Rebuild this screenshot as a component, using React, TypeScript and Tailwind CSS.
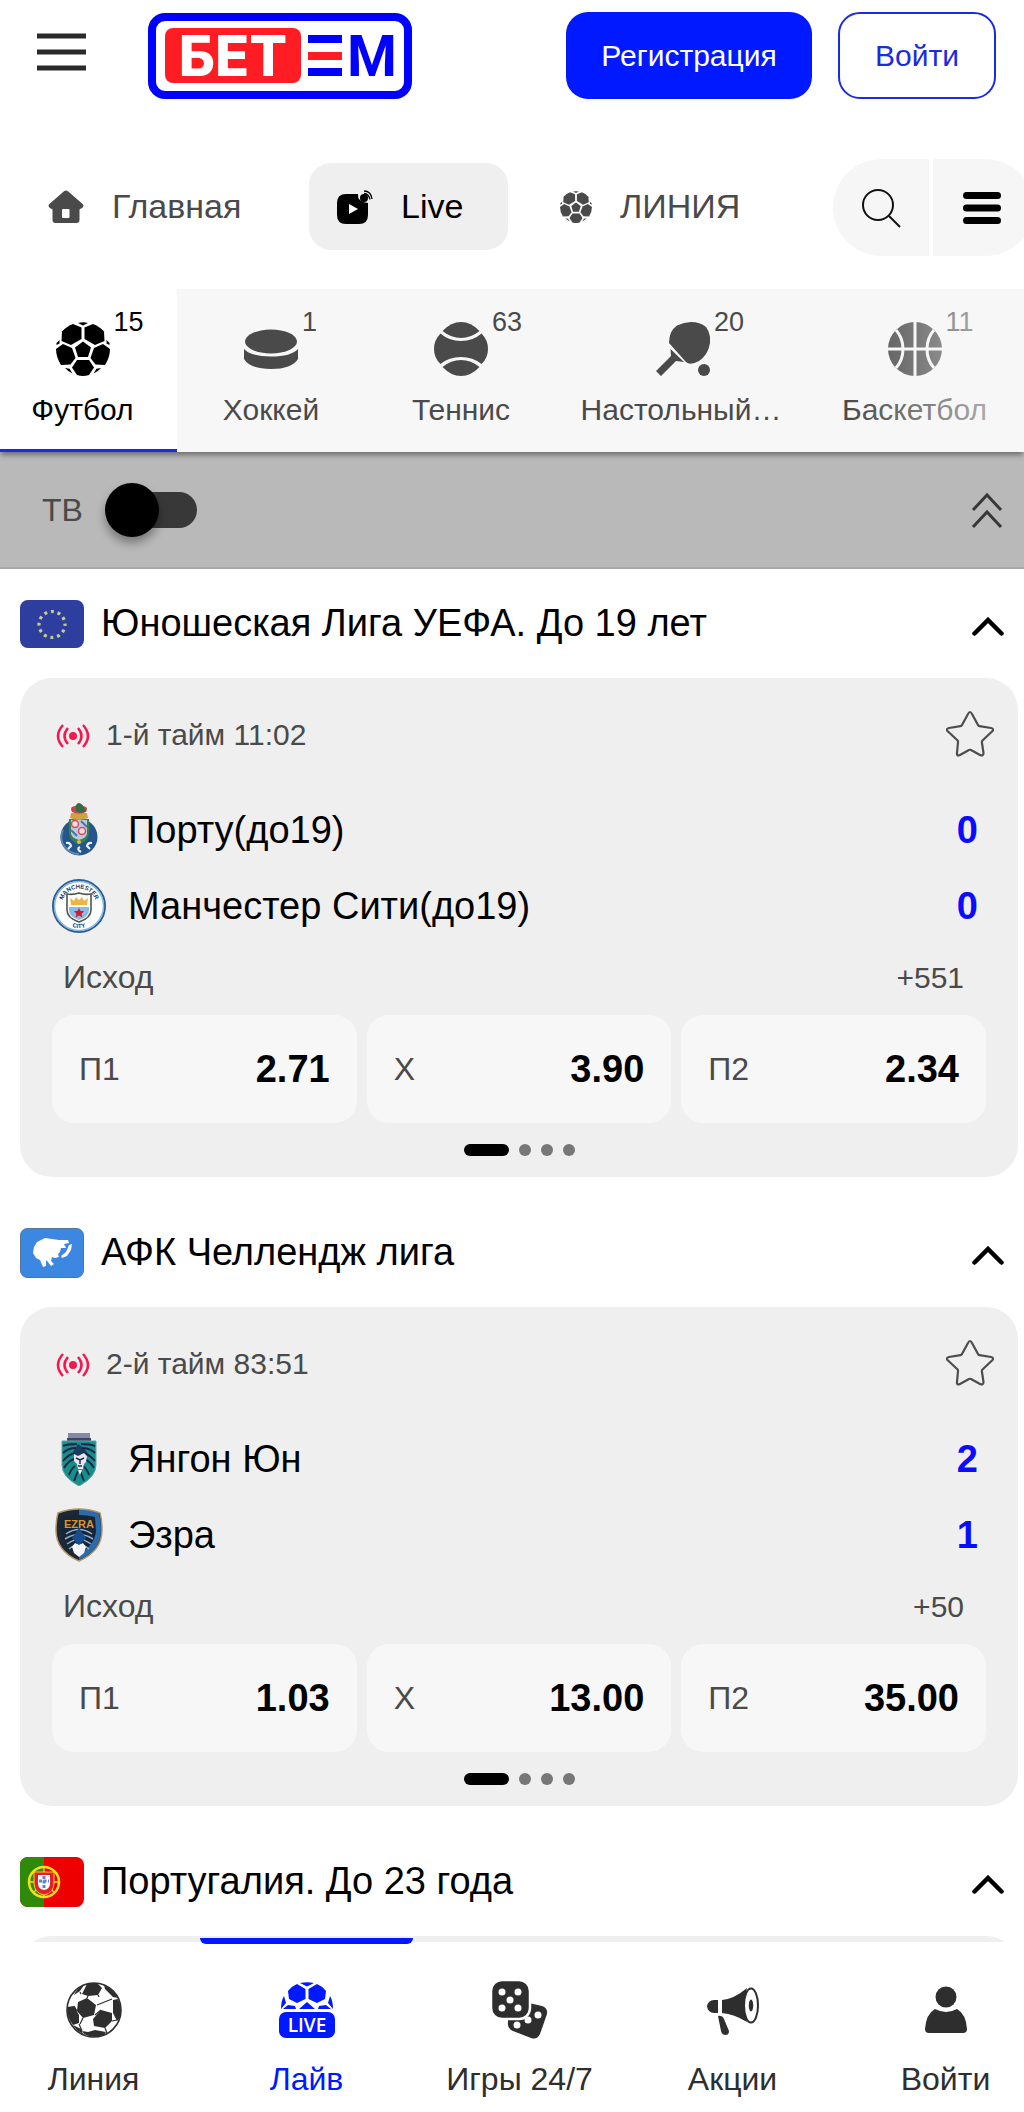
import type { ReactNode } from "react";

interface Team {
  name: string;
  score: number;
  crest: ReactNode;
}

interface Match {
  league: string;
  flag: ReactNode;
  period: string;
  teams: Team[];
  more: string;
  odds: { label: string; value: string }[];
}

/* ---------- Icons ---------- */

function Logo() {
  return (
    <svg viewBox="0 0 264 86" className="h-[86px] w-[264px]" role="img" aria-label="БЕТЕМ">
      <rect x="4" y="4" width="256" height="78" rx="13" fill="#fff" stroke="#0000ff" strokeWidth="8" />
      <rect x="17" y="15" width="136" height="55" rx="8" fill="#ff1d23" />
      <text x="85" y="63" textAnchor="middle" fill="#fff" className="font-['Inter',sans-serif] text-[56px] font-extrabold">
        БЕТ
      </text>
      <path d="M160 22h34v8h-34zM160 55h34v8h-34z" fill="#0000ff" />
      <path d="M160 39h34v8h-34z" fill="#ff1d23" />
      <text x="224" y="63" textAnchor="middle" fill="#0000ff" className="font-['Roboto',sans-serif] text-[57px] font-bold">
        М
      </text>
    </svg>
  );
}

function HomeIcon() {
  return (
    <svg viewBox="0 0 36 34" className="h-[34px] w-9" fill="currentColor">
      <path
        fillRule="evenodd"
        d="M16 1.2q2-1.6 4 0l14.600 12.800q2 2-.6 4l-2.500 1.500v10.500q0 3-3 3h-21q-3 0-3-3v-10.500L2 18q-2.600-2-.6-4zM15 19q-1 0-1 1v7q0 1 1 1h5.500q1 0 1-1v-7q0-1-1-1z"
      />
    </svg>
  );
}

function LiveIcon() {
  return (
    <svg viewBox="0 0 36 34" className="h-[34px] w-9">
      <path d="M9 4h12q-1 8 10 9v12q0 9-9 9H9q-9 0-9-9V13q0-9 9-9z" fill="#000" />
      <path d="M12 14l9 5-9 5z" fill="#fff" />
      <circle cx="27" cy="8" r="4" fill="#000" />
      <path d="M27 1q7 0 8 8M27 3.500q5 .5 6 6" stroke="#000" strokeWidth="1.300" fill="none" />
    </svg>
  );
}

function BallIcon({ className }: { className: string }) {
  return (
    <svg viewBox="0 0 54 54" className={className} fill="currentColor">
      <path d="M22 1Q27-.5 32 1l-5 2.500z" />
      <path d="M25.500 5.500V17L15 23 5.500 19l.5-9.500Q11 4 17 2z" />
      <path d="M28.500 5.500V17L39 23l9.500-4-.5-9.500Q43 4 37 2z" />
      <path d="M27 19.500l8 6L32 35H22l-3-9.500z" />
      <path d="M7 22l9 4 3.500 10-5 6.500-9.500.5Q0 35 0 27z" />
      <path d="M47 22l-9 4-3.500 10 5 6.500 9.500.5Q54 35 54 27z" />
      <path d="M21 38h12l5 7.500-5 7.500q-6 2-12 0l-5-7.500z" />
      <path d="M.5 21L3.500 18v3.500L.5 23zM53.500 21l-3-3v3.500l3 1.500zM9 46l4.500.8 3 4.700Q12 49.500 9 46zM45 46l-4.500.8-3 4.700q4.500-2 7.500-5.500z" />
    </svg>
  );
}

function SearchIcon() {
  return (
    <svg viewBox="0 0 40 40" className="size-10" fill="none" stroke="#111" strokeWidth="2">
      <circle cx="17" cy="17" r="15" />
      <path d="M28 28l11 11" />
    </svg>
  );
}

function PuckIcon() {
  return (
    <svg viewBox="0 0 54 54" className="size-[54px]" fill="currentColor">
      <ellipse cx="27" cy="19.500" rx="26" ry="12" />
      <path d="M0 27q7 7.500 27 7.500T54 27v10q-6 10-27 10T0 37z" />
    </svg>
  );
}

function TennisIcon() {
  return (
    <svg viewBox="0 0 54 54" className="size-[54px]" fill="currentColor">
      <path d="M8.500 9Q17 0 27 0t18.500 9Q37 16 27 16T8.500 9z" />
      <path d="M6.500 11.500Q15 19 27 19t20.500-7.500Q54 18 54 27t-6.500 15Q39 35 27 35T6.500 42Q0 36 0 27t6.500-15.500z" />
      <path d="M8.500 45Q17 38 27 38t18.500 7Q37 54 27 54T8.500 45z" />
    </svg>
  );
}

function TableTennisIcon() {
  return (
    <svg viewBox="-4 0 58 54" className="h-[54px] w-[58px]" fill="currentColor">
      <path d="M13 21Q13 9 21 3.500 28 0 35 0q9 0 15 5 5 6 4 16-2 12-11 18-9 5-13 1z" />
      <path d="M14.500 27L28 40l-8-1L5 54l-5-5 15-15z" />
      <circle cx="48" cy="48" r="6" />
    </svg>
  );
}

function BasketballIcon() {
  return (
    <svg viewBox="0 0 54 54" className="size-[54px]">
      <circle cx="27" cy="27" r="27" fill="currentColor" />
      <path d="M27 0v54M0 27h54M8 8q7 8 7 19T8 46M46 8q-7 8-7 19t7 19" stroke="#f7f7f7" strokeWidth="3" fill="none" />
    </svg>
  );
}

function SignalIcon() {
  return (
    <svg viewBox="0 0 34 24" className="mt-1 h-6 w-[34px]" fill="none" stroke="#f5174f" strokeWidth="2.500">
      <circle cx="17" cy="12" r="4" fill="#f5174f" stroke="none" />
      <path d="M7 1q-10 11 0 22M12 4q-7 8 0 16M27 1q10 11 0 22M22 4q7 8 0 16" />
    </svg>
  );
}

function StarIcon() {
  return (
    <svg viewBox="0 0 48 48" className="size-12" fill="none" stroke="#4d4d4d" strokeWidth="2.200" strokeLinejoin="round">
      <path d="M22 4q2-4 4 0l6 11q.5 1 1.500 1.100L45 18q3.500.8 1 3.500l-9.500 9q-.8.800-.6 2L37.500 43q0 3-3 2.200L25 40q-1-.5-2 0l-9.500 5.200q-3 .8-2.500-2.200l1-11q.2-1-.6-1.800L2 21.500q-2.500-2.700 1-3.500l11.500-1.900q1-.1 1.500-1.100z" />
    </svg>
  );
}

function ChevronUp() {
  return (
    <svg viewBox="0 0 32 19" className="h-[19px] w-8" fill="none" stroke="#000" strokeWidth="4.500" strokeLinecap="round">
      <path d="M2.500 16.500L16 3l13.500 13.500" />
    </svg>
  );
}

/* ---------- Flags and crests ---------- */

function EuFlag() {
  return (
    <svg viewBox="0 0 64 48" className="h-12 w-16 shrink-0 rounded-lg">
      <rect width="64" height="48" fill="#2d3e9f" />
      <circle cx="32" cy="24.500" r="13" fill="none" stroke="#c8cc8a" strokeWidth="3.200" strokeDasharray="3 3.807" strokeDashoffset="1.500" />
    </svg>
  );
}

function AsiaFlag() {
  return (
    <svg viewBox="0 0 64 50" className="h-[50px] w-16 shrink-0">
      <rect x=".5" y=".5" width="63" height="49" rx="7" fill="#3c87e2" stroke="#52749e" />
      <path
        d="M14 19l3-5 8-4 14 2 9 0 1 3-5 1 2 4-5 0-1 4-2 2 1 3-4 1-3-1-1 4 3 3-3 2-3-4-2-2 0 6-3 1-3-7-4-2-3-5z"
        fill="#fff"
      />
      <path d="M49 17l3-1-1 6-4 6-5 2-1-2 5-4z" fill="#fff" />
    </svg>
  );
}

function PortugalFlag() {
  return (
    <svg viewBox="0 0 64 50" className="h-[50px] w-16 shrink-0 rounded-lg">
      <rect width="64" height="50" fill="#ee0000" />
      <rect width="24" height="50" fill="#2f8a0a" />
      <circle cx="24" cy="25" r="15" fill="none" stroke="#f7e01c" strokeWidth="2.500" />
      <path d="M24 11v28M9 25h30M14 15q10 12 20 20M34 15q-10 12-20 20" stroke="#f7e01c" strokeWidth="1.300" fill="none" />
      <path d="M14 15h20v11q0 10-10 12-10-2-10-12z" fill="#e2202c" stroke="#f3d02a" />
      <path d="M18 18h12v8q0 6-6 7-6-1-6-7z" fill="#fff" />
      <path d="M24 19v13M19 24h10" stroke="#5a83c9" strokeWidth="3" strokeDasharray="3 1.500" />
    </svg>
  );
}

function PortoCrest() {
  return (
    <svg viewBox="0 0 54 54" className="size-[54px]">
      <circle cx="27" cy="34" r="18.500" fill="#24568c" />
      <path d="M11 27q-5 12 5 20 5 4 11 4" stroke="#5b87b4" strokeWidth="2" fill="none" />
      <path d="M17 16q-1 16 2 20 3 4 8 5 5-1 8-5 3-4 2-20z" fill="#3e7d4c" />
      <path d="M19 17h16v13q0 5-8 7-8-2-8-7z" fill="#b8cbe3" />
      <circle cx="23" cy="21" r="3.500" fill="#f3dbe2" stroke="#d44b5c" strokeWidth="1.500" />
      <circle cx="30" cy="28" r="3.500" fill="#f3dbe2" stroke="#d44b5c" strokeWidth="1.500" />
      <path d="M19 27l6 6M29 18l6 6" stroke="#4c74aa" strokeWidth="2" />
      <path d="M19 10h16l1 5q-9 4-18 0z" fill="#cfa23f" />
      <path d="M20 9q-3-5 3-6 4-4 8 0 6 1 3 6-7 3-14 0z" fill="#c8414a" />
      <path d="M24 8q-1-8 3-8 4 1 5 5l2 3-6 2z" fill="#2d7046" />
      <circle cx="27" cy="39" r="2" fill="#d8bc56" />
      <path d="M14 40q4-1 5 3l-3 3M40 40q-4-1-5 3l3 3M28 44q-4 2 1 5" stroke="#e8eff6" strokeWidth="2.200" fill="none" />
    </svg>
  );
}

function CityCrest() {
  return (
    <svg viewBox="0 0 54 54" className="size-[54px]">
      <circle cx="27" cy="27" r="26" fill="#fff" stroke="#2d5d8e" strokeWidth="2" />
      <circle cx="27" cy="27" r="24.500" fill="none" stroke="#83b6e2" strokeWidth="1.500" />
      <path id="city-top" d="M9.500 27a17.500 17.500 0 0 1 35 0" fill="none" />
      <path id="city-bottom" d="M5 27a22 22 0 0 0 44 0" fill="none" />
      <text fill="#1d3759" textAnchor="middle" className="font-['Liberation_Sans',sans-serif] text-[6px] font-bold">
        <textPath href="#city-top" startOffset="50%">MANCHESTER</textPath>
      </text>
      <text fill="#1d3759" textAnchor="middle" className="font-['Liberation_Sans',sans-serif] text-[6px] font-bold">
        <textPath href="#city-bottom" startOffset="50%">CITY</textPath>
      </text>
      <path d="M15 15q6 1 12-1 6 2 12 1v16q0 8-12 12-12-4-12-12z" fill="#fff" stroke="#4d554c" strokeWidth="1.600" />
      <path d="M17 28h20v3q0 7-10 10-10-3-10-10z" fill="#8abbe4" />
      <path d="M19 26h16l1-7-4 3-2-4-3 3-3-3-2 4-4-3z" fill="#efb343" />
      <path d="M27 29l1.500 3 3.500 0-2.500 3 1 3.500-3.500-2-3.500 2 1-3.500-2.500-3 3.500 0z" fill="#c9202f" />
    </svg>
  );
}

function YangonCrest() {
  return (
    <svg viewBox="0 0 54 54" className="size-[54px]">
      <path d="M16 1h22v6H16z" fill="#8389a3" />
      <path d="M15 6h24v4H15z" fill="#3c4569" />
      <path d="M10 9h34v24q0 12-17 21-17-9-17-21z" fill="#169087" stroke="#68a5ac" />
      <path
        d="M25 12q-9 0-14 2M24 16q-8 0-13 5M23 21q-6 1-12 8M22 27q-6 2-10 9M23 34q-4 3-6 9M26 39l-4 10M29 12q9 0 14 2M30 16q8 0 13 5M31 21q6 1 12 8M32 27q6 2 10 9M31 34q4 3 6 9M28 39l4 10"
        stroke="#1c2250"
        strokeWidth="1.900"
        fill="none"
      />
      <path d="M26 12l6 4 4 6-4 6-8-3-3-5z" fill="#1c2250" opacity=".75" />
      <path d="M22 22l4 2 6-3 3 3-1 6-2 2-1 5h-5l-1-5-3-3z" fill="#e9e6ee" />
      <path d="M24 26l4 2 4-2M28 28v4M26 34h4" stroke="#252b52" strokeWidth="1.500" fill="none" />
      <path d="M26 38h4l-2 5z" fill="#fff" />
    </svg>
  );
}

function EzraCrest() {
  return (
    <svg viewBox="0 0 54 54" className="size-[54px]">
      <path d="M6 5Q27-3 48 5q2 7 2 17 0 21-23 31Q4 43 4 22 4 12 6 5z" fill="#1c2836" />
      <path d="M27 2q11-1 20 4 2 7 2 16 0 20-22 30z" fill="#2a6cab" />
      <path d="M6 5Q27-3 48 5q2 7 2 17 0 21-23 31Q4 43 4 22 4 12 6 5z" fill="none" stroke="#b69566" strokeWidth="1.500" />
      <path d="M11 9q16-4 32 0l1 14q-1 14-17 23-16-9-17-23z" fill="#182536" />
      <path d="M14 26q13-9 26 0M13 31q14-9 28 0M15 36q12-9 24 0M17 41q10-9 20 0" stroke="#8fb0cf" strokeWidth="1.500" fill="none" />
      <path d="M27 20l7 10-7 8-7-8z" fill="#174d8c" />
      <path d="M20 39l3-4 4 2 4-2 3 4-2 6-5 4-5-4z" fill="#f4f6f8" />
      <text x="27" y="20" textAnchor="middle" fill="#dd9430" className="font-['Liberation_Sans',sans-serif] text-[11px] font-bold">
        EZRA
      </text>
    </svg>
  );
}

/* ---------- Bottom navigation icons ---------- */

function ClassicBallIcon() {
  return (
    <svg viewBox="0 0 56 56" className="size-14" fill="#2e2e2e">
      <circle cx="28" cy="28" r="27" fill="#fff" stroke="#2e2e2e" strokeWidth="1.600" />
      <path d="M12 20l9-4 9 7-2 10-11 3-6-7zM16 12l5-10q6-2 11 0l4 4-4 7-10 1z" />
      <path d="M35 28l11 3v8l-7 7-11-2-1-7zM1 25l7-1 5 9v8l-6 2Q1 36 1 25z" />
      <path d="M38 3q9 4 14 13l-5-1-8-8zM47 18l5-1q3 6 3 12-1 8-4 10l-4-8zM16 49l6 1 7-2 11 2-2 3q-11 4-20-1zM7 43l8 4 2 5Q10 48 7 43zM16 4l2-1-4 6-6 4q2-5 8-9z" />
      <path d="M31 23l15-6M29 33l6-5M17 36l-3 6M39 46l2 5M11 29l-3-5M46 39l5-1M22 14l-1 2M32 13l1 2M14 10l1 2M13 42l3 7" stroke="#2e2e2e" strokeWidth="1.200" />
    </svg>
  );
}

function LiveBallIcon() {
  return (
    <svg viewBox="0 0 56 56" className="size-14" fill="currentColor">
      <path d="M21 1q7-1.500 14 0l-7 3.500zM26.500 7v10L18 21l-8-4-1-8q4-5 9-7zM29.500 7v10l8.500 4 8-4 1-8q-4-5-9-7z" />
      <path d="M28 20l8 7H20zM5 14l2 7-5 6q0-8 3-13zM51 14l-2 7 5 6q0-8-3-13zM4 27l5-4 7 1 1 3zM52 27l-5-4-7 1-1 3z" />
      <rect x="0" y="30" width="56" height="26" rx="7" />
      <text x="28" y="50" textAnchor="middle" fill="#fff" className="font-['Open_Sans',sans-serif] text-[19px] font-semibold">
        LIVE
      </text>
    </svg>
  );
}

function DiceIcon() {
  return (
    <svg viewBox="0 0 56 58" className="h-[58px] w-14">
      <path d="M37 22l13 3q6 2 5 8l-7 20q-3 6-9 4L21 50q-6-3-5-9V36z" fill="#2e2e2e" />
      <rect x="-1" y="-1" width="39" height="39" rx="11" fill="#2e2e2e" stroke="#fff" strokeWidth="2.500" />
      <g fill="#fff">
        <circle cx="10" cy="11" r="3.500" />
        <circle cx="26" cy="11" r="3.500" />
        <circle cx="18" cy="19" r="3.500" />
        <circle cx="10" cy="27" r="3.500" />
        <circle cx="26" cy="27" r="3.500" />
        <circle cx="46" cy="34" r="3.500" />
        <circle cx="36" cy="39" r="3.500" />
        <circle cx="25" cy="44" r="3.500" />
      </g>
    </svg>
  );
}

function MegaphoneIcon() {
  return (
    <svg viewBox="0 0 54 56" className="h-14 w-[54px]" fill="#2e2e2e">
      <path d="M12 18v13H8q-6 0-7-6.500Q2 18 8 18zM16 18q12-1 25-12-5 17 0 34-13-8-25-9z" />
      <ellipse cx="45" cy="23.500" rx="7" ry="17" fill="#fff" stroke="#2e2e2e" strokeWidth="2" />
      <ellipse cx="45" cy="23.500" rx="2.200" ry="6" />
      <path d="M12 34q4-1 6 3l5 12q0 4-3.500 4t-4.500-4z" />
    </svg>
  );
}

function UserIcon() {
  return (
    <svg viewBox="0 0 54 56" className="h-14 w-[54px]" fill="#2e2e2e">
      <circle cx="27" cy="15" r="10.500" />
      <path d="M16 27q11 6 22 0 9 5 10 20 0 4-4 4H10q-4 0-4-4 1-15 10-20z" />
    </svg>
  );
}

/* ---------- Data ---------- */

const sports = [
  { name: "Футбол", count: 15, icon: <BallIcon className="size-[54px]" />, width: "basis-[177px]", active: true },
  { name: "Хоккей", count: 1, icon: <PuckIcon />, width: "basis-[188px]" },
  { name: "Теннис", count: 63, icon: <TennisIcon />, width: "basis-[192px]" },
  { name: "Настольный…", count: 20, icon: <TableTennisIcon />, width: "basis-[248px]" },
  { name: "Баскетбол", count: 11, icon: <BasketballIcon />, width: "basis-[219px]" },
];

const matches: Match[] = [
  {
    league: "Юношеская Лига УЕФА. До 19 лет",
    flag: <EuFlag />,
    period: "1-й тайм 11:02",
    teams: [
      { name: "Порту(до19)", score: 0, crest: <PortoCrest /> },
      { name: "Манчестер Сити(до19)", score: 0, crest: <CityCrest /> },
    ],
    more: "+551",
    odds: [
      { label: "П1", value: "2.71" },
      { label: "X", value: "3.90" },
      { label: "П2", value: "2.34" },
    ],
  },
  {
    league: "АФК Челлендж лига",
    flag: <AsiaFlag />,
    period: "2-й тайм 83:51",
    teams: [
      { name: "Янгон Юн", score: 2, crest: <YangonCrest /> },
      { name: "Эзра", score: 1, crest: <EzraCrest /> },
    ],
    more: "+50",
    odds: [
      { label: "П1", value: "1.03" },
      { label: "X", value: "13.00" },
      { label: "П2", value: "35.00" },
    ],
  },
];

const bottomNav = [
  { name: "Линия", icon: <ClassicBallIcon /> },
  { name: "Лайв", icon: <LiveBallIcon />, active: true },
  { name: "Игры 24/7", icon: <DiceIcon /> },
  { name: "Акции", icon: <MegaphoneIcon /> },
  { name: "Войти", icon: <UserIcon /> },
];

/* ---------- Sections ---------- */

function Header() {
  return (
    <header className="flex shrink-0 items-center py-3 pr-7 pl-9">
      <button type="button" aria-label="Меню" className="pb-2 text-[#2b2b2b]">
        <svg viewBox="0 0 50 40" className="h-10 w-[50px]" stroke="currentColor" strokeWidth="5">
          <path d="M1 4h49M1 20h49M1 36h49" />
        </svg>
      </button>
      <a href="#" className="ml-[62px]">
        <Logo />
      </a>
      <button type="button" className="ml-auto h-[87px] w-[246px] rounded-[22px] bg-[#0019ff] text-[30px] text-white">
        Регистрация
      </button>
      <button type="button" className="ml-[26px] h-[87px] w-[158px] rounded-[22px] border-2 border-[#1a2be0] text-[30px] text-[#1a2be0]">
        Войти
      </button>
    </header>
  );
}

function MainNav() {
  return (
    <div className="mt-12 mb-[33px] flex shrink-0 items-center pl-5">
      <nav className="flex gap-6 pb-0.5 text-[34px] text-[#4a4a4a]">
        <a href="#" className="flex h-[87px] min-w-[265px] items-center gap-7 px-7">
          <HomeIcon />
          Главная
        </a>
        <a href="#" className="flex h-[87px] min-w-[199px] items-center gap-7 rounded-[22px] bg-[#efefef] px-7 text-black">
          <LiveIcon />
          Live
        </a>
        <a href="#" className="flex h-[87px] items-center gap-7 px-7">
          <BallIcon className="size-8" />
          ЛИНИЯ
        </a>
      </nav>
      <div className="-mr-2.5 ml-auto flex gap-1">
        <button type="button" aria-label="Поиск" className="flex h-[97px] w-24 items-center justify-center rounded-l-full bg-[#f6f6f6]">
          <SearchIcon />
        </button>
        <button type="button" aria-label="Разделы" className="flex h-[97px] w-[101px] items-center justify-center rounded-r-full bg-[#f6f6f6] pr-1">
          <svg viewBox="0 0 38 34" className="h-[34px] w-[38px]" stroke="#000" strokeWidth="7" strokeLinecap="round">
            <path d="M3.500 4.500h31M3.500 17h31M3.500 29.500h31" />
          </svg>
        </button>
      </div>
    </div>
  );
}

function SportTabs() {
  return (
    <nav className="relative z-10 flex shrink-0 bg-[#f7f7f7] text-[30px] leading-9 text-[#4a4a4a] shadow-[0_4px_5px_-1px_rgba(0,0,0,0.4)]">
      {sports.map((sport) => (
        <a
          key={sport.name}
          href="#"
          className={`flex h-[163px] shrink grow flex-col items-center pt-[33px] ${sport.width} ${
            sport.active ? "border-b-3 border-[#1a2be0] bg-white pr-3 text-black" : ""
          }`}
        >
          <span className="relative">
            {sport.icon}
            <span className="absolute -top-4 left-full pl-1 text-[27px] leading-8">{sport.count}</span>
          </span>
          <span className="mt-4">{sport.name}</span>
        </a>
      ))}
      <div className="pointer-events-none absolute inset-y-0 right-0 w-44 bg-linear-to-r from-transparent to-[#f7f7f7]/70" />
    </nav>
  );
}

function TvBar() {
  return (
    <div className="flex h-[117px] shrink-0 items-center justify-between border-b-2 border-[#a8a8a8] bg-[#b9b9b9] pr-[21px] pl-[42px]">
      <label className="flex items-center gap-[22px] text-[32px] text-[#4a4a4a]">
        ТВ
        <input type="checkbox" className="peer sr-only" />
        <span className="flex h-9 w-[92px] items-center">
          <span className="z-10 size-[54px] shrink-0 rounded-full bg-black shadow-[0_6px_10px_rgba(0,0,0,0.35)]" />
          <span className="-ml-9 h-9 grow rounded-full bg-[#383838]" />
        </span>
      </label>
      <button type="button" aria-label="Свернуть все">
        <svg viewBox="0 0 32 38" className="h-[38px] w-8" fill="none" stroke="#383838" strokeWidth="3">
          <path d="M2 19L16 4l14 15M2 36l14-15 14 15" />
        </svg>
      </button>
    </div>
  );
}

function LeagueHeader({ flag, title }: { flag: ReactNode; title: string }) {
  return (
    <div className="flex h-[109px] shrink-0 items-center px-5">
      {flag}
      <h2 className="ml-[17px] text-[38px]">{title}</h2>
      <button type="button" aria-label="Свернуть" className="ml-auto pt-1.5">
        <ChevronUp />
      </button>
    </div>
  );
}

function MatchCard({ match }: { match: Match }) {
  return (
    <article className="mr-1.5 mb-[21px] ml-5 rounded-[32px] bg-[#efefef] px-8 pt-7">
      <div className="flex h-14 items-center pl-1 text-[30px] text-[#4a4a4a]">
        <SignalIcon />
        <span className="ml-4">{match.period}</span>
        <button type="button" aria-label="В избранное" className="-mr-2 ml-auto">
          <StarIcon />
        </button>
      </div>

      <div className="mt-[30px]">
        {match.teams.map((team) => (
          <div key={team.name} className="flex h-[76px] items-center text-[38px]">
            {team.crest}
            <span className="ml-[22px]">{team.name}</span>
            <span className="mr-2 ml-auto font-bold text-[#0b0bff]">{team.score}</span>
          </div>
        ))}
      </div>

      <div className="mb-[5px] flex h-[66px] items-center justify-between pr-[22px] pl-[11px] text-[#4a4a4a]">
        <span className="text-[32px]">Исход</span>
        <a href="#" className="text-[30px]">
          {match.more}
        </a>
      </div>

      <div className="grid grid-cols-3 gap-2.5">
        {match.odds.map((odd) => (
          <button
            key={odd.label}
            type="button"
            className="flex h-[108px] items-center justify-between rounded-[22px] bg-[#f7f7f7] px-[27px] text-[32px] text-[#4a4a4a]"
          >
            {odd.label}
            <span className="text-[38px] font-bold text-black">{odd.value}</span>
          </button>
        ))}
      </div>

      {/* Market slider position */}
      <div className="flex h-[54px] items-center justify-center gap-2.5">
        <span className="h-3 w-[45px] rounded-full bg-black" />
        <span className="size-3 rounded-full bg-[#777]" />
        <span className="size-3 rounded-full bg-[#777]" />
        <span className="size-3 rounded-full bg-[#777]" />
      </div>
    </article>
  );
}

function BottomNav() {
  return (
    <div className="relative z-10 h-[170px] shrink-0 bg-white">
      <nav className="-mr-7 -ml-[13px] grid h-full grid-cols-5">
        {bottomNav.map((item) => (
          <a
            key={item.name}
            href="#"
            className={`relative flex flex-col items-center pt-10 text-[32px] leading-10 ${
              item.active ? "text-[#0019ff]" : "text-[#2e2e2e]"
            }`}
          >
            {item.active && <span className="absolute inset-x-0 -top-1 h-1.5 rounded-b-lg bg-[#0019ff]" />}
            <span className="flex h-14 items-center">{item.icon}</span>
            <span className="mt-[21px]">{item.name}</span>
          </a>
        ))}
      </nav>
    </div>
  );
}

export default function App() {
  return (
    <div className="flex h-screen flex-col overflow-hidden bg-white font-['Liberation_Sans',Arial,sans-serif] text-black">
      <Header />
      <MainNav />
      <SportTabs />
      <TvBar />
      <main className="min-h-0 grow overflow-y-auto [scrollbar-width:none]">
        {matches.map((match) => (
          <section key={match.league}>
            <LeagueHeader flag={match.flag} title={match.league} />
            <MatchCard match={match} />
          </section>
        ))}
        <section>
          <LeagueHeader flag={<PortugalFlag />} title="Португалия. До 23 года" />
          <div className="mr-1.5 ml-5 h-16 rounded-t-[32px] bg-[#efefef]" />
        </section>
      </main>
      <BottomNav />
    </div>
  );
}
